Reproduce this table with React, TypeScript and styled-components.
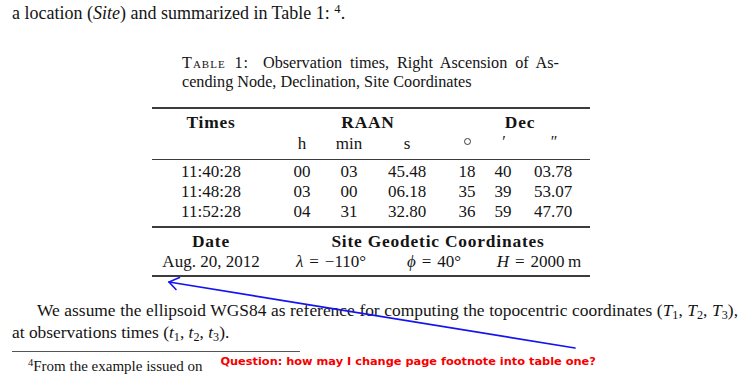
import * as React from 'react'
import styled, { createGlobalStyle } from 'styled-components'

const GlobalStyle = createGlobalStyle`
    html, body {
        margin: 0;
        padding: 0;
        background: #ffffff;
    }
    body {
        font-family: "Liberation Serif", "DejaVu Serif", serif;
        color: #141414;
    }
`

const Page = styled.div`
    position: relative;
    width: 750px;
    height: 387px;
    overflow: hidden;
    background: #fff;
`

const TopText = styled.p`
    margin: 0;
    padding-left: 12px;
    font-size: 18px;
    line-height: 26px;
`

const Math = styled.i`
    font-style: italic;
`

const Op = styled.span`
    margin: 0 6px;
`

const Sub = styled.sub`
    font-size: 0.7em;
    vertical-align: -0.25em;
    line-height: 0;
`

const Sup = styled.sup`
    font-size: 0.7em;
    vertical-align: 0.5em;
    line-height: 0;
`

const Figure = styled.div`
    margin: 28px 0 0 152px;
    width: 438px;
`

const Caption = styled.p`
    margin: 0 0 0 30px;
    width: 377px;
    font-size: 16.2px;
    line-height: 19px;
    text-align: justify;
    text-align-last: left;
`

const CaptionLabel = styled.span`
    font-variant: small-caps;
    letter-spacing: 1px;
    margin-right: 6px;
`

const Rule = styled.div<{ $weight: number; $gap: number }>`
    height: ${p => p.$weight}px;
    margin-top: ${p => p.$gap}px;
    background: #3c3c3c;
`

const Grid = styled.div<{ $cols: string; $gap: number; $line: number }>`
    display: grid;
    grid-template-columns: ${p => p.$cols};
    grid-auto-rows: ${p => p.$line}px;
    margin-top: ${p => p.$gap}px;
    font-size: 17px;
`

const Cell = styled.div<{ $span?: number; $shift?: number; $bold?: boolean }>`
    display: flex;
    justify-content: center;
    align-items: center;
    white-space: nowrap;
    grid-column: span ${p => p.$span ?? 1};
    padding-left: ${p => p.$shift ?? 0}px;
    font-weight: ${p => (p.$bold ? 700 : 400)};
    font-size: ${p => (p.$bold ? '17.4px' : '17px')};
    letter-spacing: ${p => (p.$bold ? '0.8px' : '0')};
`

const Unit = styled.span<{ $lift: number }>`
    font-size: 16px;
    transform: translateY(${p => -p.$lift}px);
`

const Degree = styled.span`
    display: inline-block;
    width: 5px;
    height: 5px;
    border: 1px solid #3a3a3a;
    border-radius: 50%;
    transform: translateY(-3px);
`

const Paragraph = styled.div`
    margin-top: 22px;
    padding: 0 12px;
    font-size: 17.4px;
    line-height: 22px;
`

const Line = styled.div<{ $indent?: number; $full?: boolean }>`
    white-space: nowrap;
    padding-left: ${p => p.$indent ?? 0}px;
    text-align: ${p => (p.$full ? 'justify' : 'left')};
    text-align-last: ${p => (p.$full ? 'justify' : 'left')};
`

const FootRule = styled.div`
    margin: 8px 0 0 12px;
    width: 288px;
    height: 1px;
    background: #555;
`

const FootRow = styled.div`
    display: flex;
    align-items: flex-start;
    margin-top: 4px;
    padding-left: 28px;
`

const FootText = styled.span`
    font-size: 15px;
    line-height: 20px;
`

const Question = styled.span`
    margin: -2px 0 0 18px;
    font-family: "DejaVu Sans", "Liberation Sans", sans-serif;
    font-weight: 700;
    font-size: 11.35px;
    line-height: 14px;
    color: #f50000;
`

const Overlay = styled.svg`
    position: absolute;
    left: 0;
    top: 0;
    pointer-events: none;
`

const rows = [
    ['11:40:28', '00', '03', '45.48', '18', '40', '03.78'],
    ['11:48:28', '03', '00', '06.18', '35', '39', '53.07'],
    ['11:52:28', '04', '31', '32.80', '36', '59', '47.70'],
]

const mainCols = '118px 64px 30px 86px 34px 38px 62px 6px'

export default function App() {
    return (
        <Page>
            <GlobalStyle />
            <TopText>
                a location (<Math>Site</Math>) and summarized in Table 1: <Sup>4</Sup>.
            </TopText>

            <Figure>
                <Caption>
                    <CaptionLabel>Table 1:</CaptionLabel> Observation times, Right Ascension of As-
                    cending Node, Declination, Site Coordinates
                </Caption>

                <Rule $weight={2} $gap={15} />
                <Grid $cols={mainCols} $gap={2} $line={22}>
                    <Cell $bold>Times</Cell>
                    <Cell $bold $span={3} $shift={16}>RAAN</Cell>
                    <Cell $bold $span={3} $shift={6}>Dec</Cell>
                    <Cell />
                    <Cell />
                    <Cell>h</Cell>
                    <Cell>min</Cell>
                    <Cell>s</Cell>
                    <Cell><Degree /></Cell>
                    <Cell><Unit $lift={2}><Math>′</Math></Unit></Cell>
                    <Cell><Unit $lift={2}><Math>″</Math></Unit></Cell>
                    <Cell />
                </Grid>
                <Rule $weight={1} $gap={4} />
                <Grid $cols={mainCols} $gap={2} $line={20}>
                    {rows.map(r =>
                        [...r, ''].map((v, i) => <Cell key={r[0] + i}>{v}</Cell>)
                    )}
                </Grid>
                <Rule $weight={1.5} $gap={4} />
                <Grid $cols="118px 122px 84px 114px" $gap={3} $line={21}>
                    <Cell $bold>Date</Cell>
                    <Cell $bold $span={3} $shift={16}>Site Geodetic Coordinates</Cell>
                    <Cell>Aug. 20, 2012</Cell>
                    <Cell><Math>λ</Math><Op>=</Op>−110°</Cell>
                    <Cell><Math>ϕ</Math><Op>=</Op>40°</Cell>
                    <Cell $shift={12}><Math>H</Math><Op>=</Op>2000&thinsp;m</Cell>
                </Grid>
                <Rule $weight={2} $gap={2} />
            </Figure>

            <Paragraph>
                <Line $indent={25} $full>
                    We assume the ellipsoid WGS84 as reference for computing the topocentric coordinates
                    (<Math>T</Math><Sub>1</Sub>, <Math>T</Math><Sub>2</Sub>, <Math>T</Math><Sub>3</Sub>),
                </Line>
                <Line>
                    at observations times (<Math>t</Math><Sub>1</Sub>, <Math>t</Math><Sub>2</Sub>, <Math>t</Math><Sub>3</Sub>).
                </Line>
            </Paragraph>

            <FootRule />
            <FootRow>
                <FootText><Sup>4</Sup>From the example issued on</FootText>
                <Question>Question: how may I change page footnote into table one?</Question>
            </FootRow>

            <Overlay width={750} height={387} viewBox="0 0 750 387">
                <g stroke="#1414f0" strokeWidth={1.6} fill="none" strokeLinecap="round">
                    <line x1={575} y1={348} x2={169} y2={282} />
                    <polyline points="179.5,277.5 169,282 176,289.5" />
                </g>
            </Overlay>
        </Page>
    )
}
